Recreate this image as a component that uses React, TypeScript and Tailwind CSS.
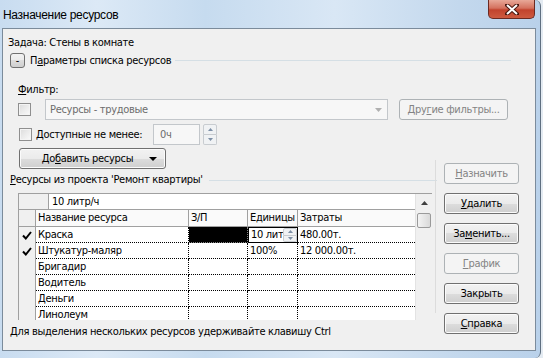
import React from "react";

const font = "font-['DejaVu_Sans_Condensed','Liberation_Sans',sans-serif] text-[11px] leading-[14px] tracking-[-0.3px]";

function Btn(props: { children: React.ReactNode; disabled?: boolean; className?: string }) {
    const { children, disabled, className = "" } = props;
    return (
        <div
            className={`flex items-center justify-center h-[21px] rounded-[3px] border ${
                disabled
                    ? "border-[#adb2b5] bg-[#f4f4f4] text-[#838383]"
                    : "border-[#707070] bg-[linear-gradient(#f2f2f2,#ebebeb_50%,#dddddd_50%,#cfcfcf)] shadow-[inset_0_0_0_1px_#fbfbfb] text-black"
            } ${className}`}
        >
            {children}
        </div>
    );
}

function CheckBox() {
    return (
        <div className="w-[13px] h-[13px] border border-[#8f8f8f] bg-[linear-gradient(135deg,#dcdcdc,#fbfbfb)] shadow-[inset_0_0_0_1px_#f4f4f4]" />
    );
}

function Tick() {
    return (
        <svg width="10" height="9" viewBox="0 0 10 9">
            <path d="M1 4.5 L3.8 7.5 L9 1" stroke="#000" strokeWidth="2" fill="none" />
        </svg>
    );
}

function Spin(props: { className?: string }) {
    return (
        <div className={`flex flex-col ${props.className || ""}`}>
            <div className="flex-1 flex items-center justify-center border border-[#c8ccd0] rounded-t-[2px] bg-[#f0f2f4]">
                <svg width="5" height="3" viewBox="0 0 5 3"><path d="M0 3 L2.5 0 L5 3Z" fill="#7d8fa6" /></svg>
            </div>
            <div className="flex-1 flex items-center justify-center border border-t-0 border-[#c8ccd0] rounded-b-[2px] bg-[#f0f2f4]">
                <svg width="5" height="3" viewBox="0 0 5 3"><path d="M0 0 L2.5 3 L5 0Z" fill="#7d8fa6" /></svg>
            </div>
        </div>
    );
}

const rows = [
    { check: true, name: "Краска", units: "10 лит", cost: "480.00т.", active: true },
    { check: true, name: "Штукатур-маляр", units: "100%", cost: "12 000.00т." },
    { name: "Бригадир" },
    { name: "Водитель" },
    { name: "Деньги" },
    { name: "Линолеум" },
];

function ResourceGrid() {
    return (
        <div className="ml-[15px] mt-[6px] w-[414px] h-[127px] overflow-hidden flex border-t border-l border-[#a0a0a0] bg-white">
            <div className="w-[397px] flex flex-col">
                {/* строка ввода */}
                <div className="flex h-[16px] shrink-0 border-b border-[#a0a0a0]">
                    <div className="w-[30px] bg-[#f0f0f0] border-r border-[#a0a0a0]" />
                    <div className="flex-1 pl-[3px] leading-[15px]">10 литр/ч</div>
                </div>
                {/* заголовки */}
                <div className="flex h-[17px] shrink-0 border-b border-[#a0a0a0] bg-[#fafafa] leading-[16px]">
                    <div className="w-[17px] bg-[#f0f0f0] border-r border-[#a0a0a0]" />
                    <div className="w-[153px] pl-[2px] border-r border-[#a0a0a0]">Название ресурса</div>
                    <div className="w-[59px] pl-[2px] border-r border-[#a0a0a0]">З/П</div>
                    <div className="w-[50px] pl-[2px] border-r border-[#a0a0a0]">Единицы</div>
                    <div className="flex-1 pl-[2px]">Затраты</div>
                </div>
                {rows.map((r) => (
                    <div key={r.name} className="flex h-[16px] shrink-0 leading-[15px]">
                        <div className="w-[17px] bg-[#f0f0f0] border-r border-[#a0a0a0] flex items-center justify-center">
                            {r.check && <Tick />}
                        </div>
                        <div className="w-[153px] pl-[2px] border-r border-b border-dotted border-black">{r.name}</div>
                        {r.active ? (
                            <div className="w-[59px] bg-black border-r border-b border-dotted border-[#888]" />
                        ) : (
                            <div className="w-[59px] border-r border-b border-dotted border-black" />
                        )}
                        {r.active ? (
                            <div className="w-[50px] flex border border-black bg-white">
                                <div className="w-[34px] pl-[2px] leading-[13px] overflow-hidden whitespace-nowrap">{r.units}</div>
                                <Spin className="w-[14px]" />
                            </div>
                        ) : (
                            <div className="w-[50px] pl-[2px] border-r border-b border-dotted border-black">{r.units}</div>
                        )}
                        <div className="flex-1 pl-[2px] border-b border-dotted border-black">{r.cost}</div>
                    </div>
                ))}
            </div>
            {/* прокрутка */}
            <div className="w-[17px] bg-[#f0f0f0] border-l border-[#e3e3e3] flex flex-col items-center">
                <div className="h-[17px] flex items-center justify-center">
                    <svg width="7" height="4" viewBox="0 0 7 4"><path d="M0 4 L3.5 0 L7 4Z" fill="#404040" /></svg>
                </div>
                <div className="mt-[2px] w-[14px] h-[15px] rounded-[2px] border border-[#9a9a9a] bg-[linear-gradient(90deg,#f3f3f3,#e6e6e6_50%,#d9d9d9)]" />
            </div>
        </div>
    );
}

export default function App() {
    return (
        <div className={`w-[543px] h-[358px] overflow-hidden bg-[#e4ebf2] ${font}`}>
            <div className="w-[541px] h-[358px] flex flex-col rounded-tr-[6px] rounded-br-[6px] border-r border-[#5f6f80] bg-[linear-gradient(90deg,#c8dcf0,#dce9f6_18%,#c6dbef_38%,#d9e7f5_62%,#c3d8ed_85%,#b9d1ea)]">
                {/* заголовок окна */}
                <div className="h-[28px] flex items-start shrink-0">
                    <div className="flex-1 pl-[3px] pt-[8px] text-[12px] font-['Liberation_Sans',sans-serif] text-black">
                        Назначение ресурсов
                    </div>
                    <div className="mr-[5px] w-[47px] h-[19px] rounded-b-[5px] border border-t-0 border-[#6b2a22] bg-[linear-gradient(#e8a898,#d4715e_45%,#c2432d_55%,#cd5a40)] flex items-center justify-center">
                        <svg width="14" height="11" viewBox="0 0 14 11">
                            <path d="M2 1 L12 10 M12 1 L2 10" stroke="#4a1810" strokeWidth="4" strokeLinecap="square" />
                            <path d="M2 1 L12 10 M12 1 L2 10" stroke="#fff" strokeWidth="2" />
                        </svg>
                    </div>
                </div>

                {/* клиентская область */}
                <div className="ml-[2px] w-[534px] h-[323px] shrink-0 border border-[#7b8b9b] bg-[#f0f0f0] flex flex-col">
                    <div className="mt-[7px] pl-[5px] h-[14px]">Задача: Стены в комнате</div>

                    <div className="mt-[2px] h-[17px] flex items-center">
                        <div className="ml-[7px] w-[15px] h-[15px] rounded-[3px] border border-[#707070] bg-[linear-gradient(#f2f2f2,#ebebeb_50%,#dddddd_50%,#cfcfcf)] flex items-center justify-center leading-none">
                            -
                        </div>
                        <div className="ml-[5px]">
                            П<u>а</u>раметры списка ресурсов
                        </div>
                        <div className="flex-1 ml-[4px] mr-[24px] h-px bg-[#d5dfe5]" />
                    </div>

                    <div className="mt-[14px] pl-[15px] h-[14px]">
                        <u>Ф</u>ильтр:
                    </div>

                    <div className="mt-[2px] h-[21px] flex items-center">
                        <div className="ml-[15px]">
                            <CheckBox />
                        </div>
                        <div className="ml-[14px] w-[343px] h-[21px] border border-[#c3c7cb] bg-[#f7f7f7] flex items-center">
                            <div className="flex-1 pl-[4px] text-[#6d6d6d]">Ресурсы - трудовые</div>
                            <svg className="mr-[5px]" width="7" height="4" viewBox="0 0 7 4"><path d="M0 0 L3.5 4 L7 0Z" fill="#b0b0b0" /></svg>
                        </div>
                        <Btn disabled className="ml-[11px] w-[109px]">
                            <span>
                                Дру<u>г</u>ие фильтры...
                            </span>
                        </Btn>
                    </div>

                    <div className="mt-[4px] h-[21px] flex items-center">
                        <div className="ml-[16px]">
                            <CheckBox />
                        </div>
                        <div className="ml-[4px] w-[117px]">
                            <u>Д</u>оступные не менее:
                        </div>
                        <div className="w-[47px] h-[21px] border border-[#c3c7cb] bg-[#f7f7f7] pl-[6px] flex items-center text-[#6d6d6d]">
                            0ч
                        </div>
                        <Spin className="ml-[3px] w-[14px] h-[21px]" />
                    </div>

                    <div className="flex">
                        {/* левая часть */}
                        <div className="w-[434px] flex flex-col">
                            <Btn className="ml-[16px] mt-[3px] w-[147px]">
                                <span className="ml-[14px]">
                                    До<u>б</u>авить ресурсы
                                </span>
                                <svg className="ml-[16px]" width="8" height="4" viewBox="0 0 8 4"><path d="M0 0 L4 4 L8 0Z" fill="#000" /></svg>
                            </Btn>
                            <div className="mt-[4px] h-[14px] flex items-center pl-[7px]">
                                <div>
                                    <u>Р</u>есурсы из проекта 'Ремонт квартиры'
                                </div>
                                <div className="flex-1 ml-[6px] h-px bg-[#d5dfe5]" />
                            </div>
                            <ResourceGrid />
                            <div className="mt-[5px] pl-[7px] h-[14px]">
                                Для выделения нескольких ресурсов удерживайте клавишу Ctrl
                            </div>
                        </div>

                        <div className="-ml-[2px] mt-[15px] w-px h-[153px] bg-[#dcdcdc]" />

                        {/* кнопки справа */}
                        <div className="ml-[8px] pt-[18px] flex flex-col gap-[9px]">
                            <Btn disabled className="w-[75px]">
                                <span><u>Н</u>азначить</span>
                            </Btn>
                            <Btn className="w-[75px]">
                                <span><u>У</u>далить</span>
                            </Btn>
                            <Btn className="w-[75px]">
                                <span>За<u>м</u>енить...</span>
                            </Btn>
                            <Btn disabled className="w-[75px]">
                                <span><u>Г</u>рафик</span>
                            </Btn>
                            <Btn className="w-[75px]">
                                <span>Закрыть</span>
                            </Btn>
                            <Btn className="w-[75px]">
                                <span><u>С</u>правка</span>
                            </Btn>
                        </div>
                    </div>
                </div>
            </div>
        </div>
    );
}
